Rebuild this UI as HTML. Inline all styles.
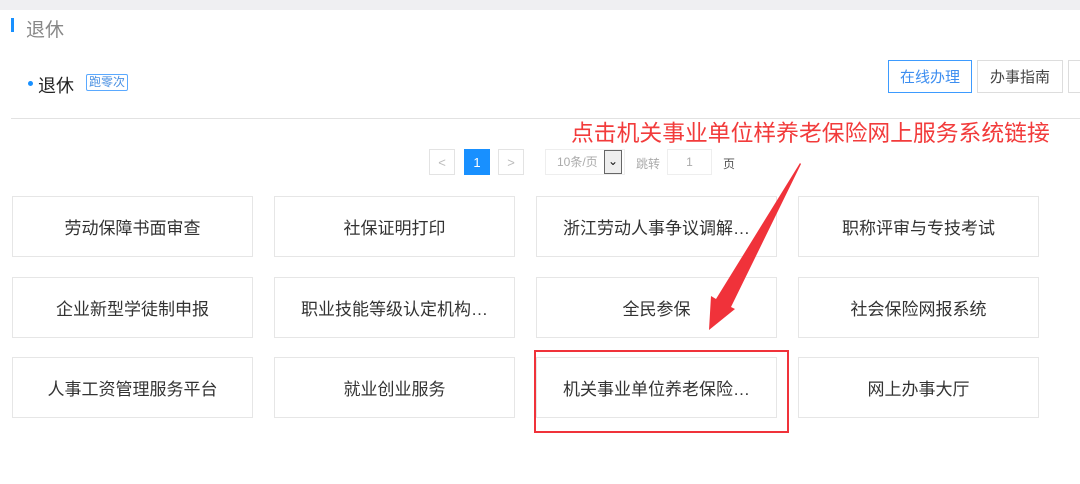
<!DOCTYPE html>
<html><head><meta charset="utf-8"><style>
*{margin:0;padding:0;box-sizing:border-box}
body{width:1080px;height:484px;background:#fff;position:relative;overflow:hidden;font-family:"Liberation Sans","Noto Sans CJK SC",sans-serif}
.top{position:absolute;left:0;top:0;width:1080px;height:10px;background:#efeff2}
.a{position:absolute}
.card{position:absolute;width:241px;height:61px;border:1px solid #e6e6e6;font-size:17px;color:#333;display:flex;align-items:center;justify-content:center}
.pg{position:absolute;top:149px;width:26px;height:26px;border:1px solid #e3e3e3;color:#bbb;font-size:13px;display:flex;align-items:center;justify-content:center}
</style></head><body>
<div class="top"></div>
<div class="a" style="left:11px;top:18px;width:3px;height:14px;background:#1890ff"></div>
<div class="a" style="left:26px;top:15px;font-size:19px;color:#888">退休</div>
<div class="a" style="left:28px;top:81px;width:5px;height:5px;border-radius:50%;background:#1890ff"></div>
<div class="a" style="left:38px;top:72px;font-size:18px;color:#222">退休</div>
<div class="a" style="left:86px;top:74px;width:42px;height:17px;border:1px solid #5aa9ff;border-radius:2px;color:#4a90e2;font-size:12px;line-height:15px;text-align:center">跑零次</div>
<div class="a" style="left:888px;top:60px;width:84px;height:33px;border:1px solid #3d9bff;color:#3d8ef0;font-size:15px;display:flex;align-items:center;justify-content:center">在线办理</div>
<div class="a" style="left:977px;top:60px;width:86px;height:33px;border:1px solid #ddd;color:#444;font-size:15px;display:flex;align-items:center;justify-content:center">办事指南</div>
<div class="a" style="left:1068px;top:60px;width:20px;height:33px;border:1px solid #ddd"></div>
<div class="a" style="left:11px;top:118px;width:1069px;height:1px;background:#e2e2e2"></div>
<div class="a" style="left:571px;top:115px;font-size:22.8px;color:#f23b3b;white-space:nowrap">点击机关事业单位样养老保险网上服务系统链接</div>
<div class="pg" style="left:429px">&lt;</div>
<div class="pg" style="left:464px;background:#1890ff;border-color:#1890ff;color:#fff">1</div>
<div class="pg" style="left:498px">&gt;</div>
<div class="a" style="left:545px;top:149px;width:80px;height:26px;border:1px solid #eee;font-size:12px;color:#aaa;line-height:24px;padding-left:11px">10条/页</div>
<div class="a" style="left:604px;top:150px;width:18px;height:24px;border:1px solid #666;background:#eee;font-size:12px;line-height:20px;text-align:center;color:#111">⌄</div>
<div class="a" style="left:636px;top:155px;font-size:12px;color:#aaa">跳转</div>
<div class="a" style="left:667px;top:149px;width:45px;height:26px;border:1px solid #eee;font-size:12px;color:#aaa;text-align:center;line-height:24px">1</div>
<div class="a" style="left:723px;top:155px;font-size:12px;color:#555">页</div>

<div class="card" style="left:12px;top:196px">劳动保障书面审查</div>
<div class="card" style="left:274px;top:196px">社保证明打印</div>
<div class="card" style="left:536px;top:196px">浙江劳动人事争议调解…</div>
<div class="card" style="left:798px;top:196px">职称评审与专技考试</div>
<div class="card" style="left:12px;top:277px">企业新型学徒制申报</div>
<div class="card" style="left:274px;top:277px">职业技能等级认定机构…</div>
<div class="card" style="left:536px;top:277px">全民参保</div>
<div class="card" style="left:798px;top:277px">社会保险网报系统</div>
<div class="card" style="left:12px;top:357px">人事工资管理服务平台</div>
<div class="card" style="left:274px;top:357px">就业创业服务</div>
<div class="card" style="left:536px;top:357px">机关事业单位养老保险…</div>
<div class="card" style="left:798px;top:357px">网上办事大厅</div>
<div class="a" style="left:534px;top:350px;width:255px;height:83px;border:2.5px solid #f0323a"></div>
<svg class="a" style="left:0;top:0" width="1080" height="484">
<polygon points="800,163 801,164 731,307 735,309 709,330 711,296 716,299" fill="#f0323a"/>
</svg>
</body></html>
